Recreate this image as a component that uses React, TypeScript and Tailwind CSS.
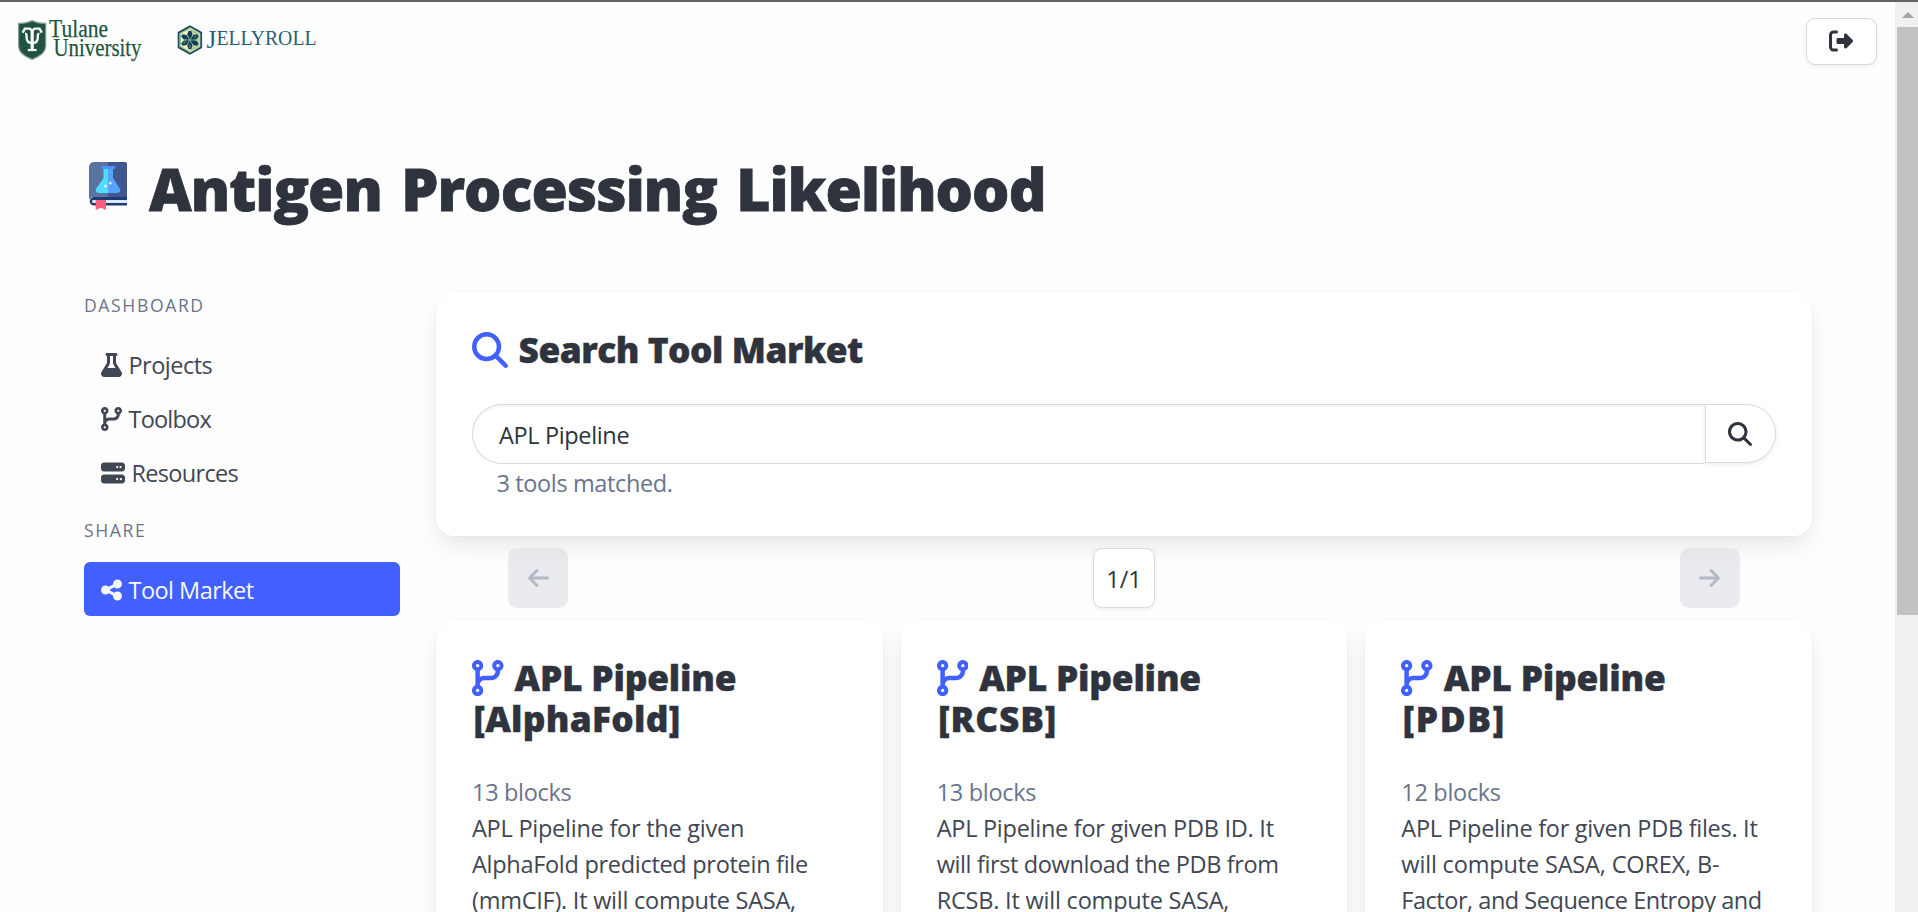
import type { ReactNode } from "react";
import {
  FaArrowLeft,
  FaArrowRight,
  FaCodeBranch,
  FaFlask,
  FaMagnifyingGlass,
  FaRightFromBracket,
  FaServer,
  FaShareNodes,
} from "react-icons/fa6";

type Line = { text: string; tracking: string };

type Tool = {
  name: Line;
  source: Line;
  blocks: string;
  lines: Line[];
};

const tools: Tool[] = [
  {
    name: { text: "APL Pipeline", tracking: "tracking-[-0.21px]" },
    source: { text: "[AlphaFold]", tracking: "tracking-[0.27px]" },
    blocks: "13 blocks",
    lines: [
      { text: "APL Pipeline for the given", tracking: "tracking-[-0.25px]" },
      { text: "AlphaFold predicted protein file", tracking: "tracking-[-0.3px]" },
      { text: "(mmCIF). It will compute SASA,", tracking: "tracking-[-0.26px]" },
    ],
  },
  {
    name: { text: "APL Pipeline", tracking: "tracking-[-0.21px]" },
    source: { text: "[RCSB]", tracking: "tracking-[0.85px]" },
    blocks: "13 blocks",
    lines: [
      { text: "APL Pipeline for given PDB ID. It", tracking: "tracking-[-0.27px]" },
      { text: "will first download the PDB from", tracking: "tracking-[-0.38px]" },
      { text: "RCSB. It will compute SASA,", tracking: "tracking-[-0.21px]" },
    ],
  },
  {
    name: { text: "APL Pipeline", tracking: "tracking-[-0.21px]" },
    source: { text: "[PDB]", tracking: "tracking-[1.6px]" },
    blocks: "12 blocks",
    lines: [
      { text: "APL Pipeline for given PDB files. It", tracking: "tracking-[-0.29px]" },
      { text: "will compute SASA, COREX, B-", tracking: "tracking-[-0.17px]" },
      { text: "Factor, and Sequence Entropy and", tracking: "tracking-[-0.48px]" },
    ],
  },
];

const cardShadow =
  "shadow-[0_12px_24px_-3px_rgba(10,10,10,0.1),0_0_0_1px_rgba(10,10,10,0.02)]";
const buttonShadow = "shadow-[0_2px_5px_rgba(46,51,61,0.08)]";

function TulaneLogo() {
  return (
    <svg className="h-[46px] w-[126px] overflow-visible" viewBox="0 0 126 46" role="img">
      <path
        d="M.6 3.4C5.5 3.4 10.500 2.600 14.200.6c3.700 2 8.700 2.800 13.500 2.800v22.400c0 7-5.500 10.600-13.500 13.600C6.200 36.400.6 32.800.6 25.800Z"
        fill="#1f5540"
        stroke="#8d9893"
        strokeWidth="1.2"
      />
      <g fill="none" stroke="#fff">
        <path d="M4.600 12.600 6.900 8.600h4.800l2.500 1.800 2.500-1.800h4.800l2.300 4" strokeWidth="2.400" />
        <path d="M14.200 9v20" strokeWidth="3.200" />
        <path d="M7 13.600c2 0 1.600 2 1.600 4 0 3.600 2 5.600 5.600 5.600s5.600-2 5.600-5.600c0-2-.4-4 1.600-4" strokeWidth="2.300" />
        <path d="M9.800 30h8.800" strokeWidth="2.200" />
      </g>
      <g className="font-['Liberation_Serif',serif]" fill="#1f5540" stroke="#1f5540" strokeWidth=".25">
        <text x="31" y="17" fontSize="25" textLength="59" lengthAdjust="spacingAndGlyphs">
          Tulane
        </text>
        <text x="35.500" y="36" fontSize="25" textLength="88" lengthAdjust="spacingAndGlyphs">
          University
        </text>
      </g>
    </svg>
  );
}

function JellyrollLogo() {
  return (
    <svg className="h-[30px] w-[140px] overflow-visible" viewBox="0 0 140 30" role="img">
      <path d="M12.900 1.200 24.200 7.600v14.800L12.900 28.800 1.600 22.400V7.600Z" fill="#f0f2bd" stroke="#1b4a63" strokeWidth="1.800" strokeLinejoin="round" />
      <path d="M12.900 3 22.600 8.500v13L12.900 27l6-12Z" fill="#79ac8c" opacity=".55" />
      <path d="M12.900 3 3.200 8.500v13L12.900 27" fill="none" stroke="#6f9f7c" />
      <g fill="#123d55">
        {[0, 60, 120, 180, 240, 300].map((angle) => (
          <path key={angle} d="M12.900 15 10.200 9.500l1.400-3.800h2.600l1.400 3.800Z" transform={`rotate(${angle} 12.900 15)`} />
        ))}
      </g>
      <circle cx="12.900" cy="15" r="1.800" fill="#69a586" />
      <path d="m9.900 10 1.700 2.800M6.400 18l3-1.300M12.900 19.500V23M16.900 12.500l2.200-1.500" stroke="#7fb79a" strokeWidth=".8" />
      <text x="29.500" y="22.600" fontSize="25" fill="#27607a" className="font-['Liberation_Serif',serif]">
        J
        <tspan x="39.500" y="19.900" fontSize="20.500" textLength="100" lengthAdjust="spacingAndGlyphs">
          ELLYROLL
        </tspan>
      </text>
    </svg>
  );
}

function BookIcon() {
  return (
    <svg className="h-12 w-[38px] shrink-0" viewBox="0 0 38 48">
      <path d="M5 35h33v8.500H5a4.250 4.250 0 0 1 0-8.500Z" fill="#1f3b75" />
      <path d="M4.500 38H38v3H4.500c-2.200 0-2.200-3 0-3Z" fill="#dfe8fb" />
      <path d="M5 0h14v35H5c-2.200 0-4 .8-5 2.600V5a5 5 0 0 1 5-5Z" fill="#5b749f" />
      <path d="M19 0h17.500A1.500 1.500 0 0 1 38 1.500V35H19Z" fill="#40588f" />
      <path d="M6.700 38H17v10l-5.100-2.300L6.700 48Z" fill="#ff5f7e" />
      <path d="M14.500 6H19v25h-9c-3 0-4-2.600-2.600-4.700L14.500 16Z" fill="#50dcff" />
      <path d="M19 6h5v10l6.600 10.300C32 28.400 31 31 28 31h-9Z" fill="#57a4ff" />
      <path d="M13.500 4H25a1.500 1.500 0 0 1 0 3H13.500a1.500 1.500 0 0 1 0-3Z" fill="#4793ff" />
      <circle cx="16.500" cy="24" r="1.500" fill="#d9f8ff" />
      <circle cx="21.300" cy="21" r="1.500" fill="#d3e8ff" />
    </svg>
  );
}

function MenuLabel({ children }: { children: ReactNode }) {
  return (
    <p className="h-[27px] text-[17.6px] leading-[27px] tracking-[1.6px] text-[#69748c]">{children}</p>
  );
}

function MenuItem({ icon, label, tracking, active }: { icon: ReactNode; label: string; tracking: string; active?: boolean }) {
  return (
    <a
      className={`flex h-[54px] items-center gap-[6.5px] rounded-md pl-[17px] ${
        active ? "bg-[#4160ff] text-[#f5f7ff]" : "text-[#404654]"
      }`}
    >
      {icon}
      <span className={`pt-px ${tracking}`}>{label}</span>
    </a>
  );
}

function ToolCard({ tool }: { tool: Tool }) {
  return (
    <article className={`rounded-[18px] bg-white p-9 ${cardShadow}`}>
      <h2 className="font-extrabold text-[35.3px] leading-[40.5px] text-[#2e333d] [-webkit-text-stroke:0.4px_#2e333d]">
        <span className="flex items-center gap-[11px]">
          <FaCodeBranch className="mt-[3px] h-9 w-[31.5px] shrink-0 text-[#4160ff]" />
          <span className={`whitespace-nowrap pt-px ${tool.name.tracking}`}>{tool.name.text}</span>
        </span>
        <span className={`block pl-[1.5px] pt-px ${tool.source.tracking}`}>{tool.source.text}</span>
      </h2>
      <p className="mt-[35px] text-[#69748c] tracking-[-0.32px]">{tool.blocks}</p>
      <p className="text-[#404654]">
        {tool.lines.map((line) => (
          <span key={line.text} className={`block whitespace-nowrap ${line.tracking}`}>
            {line.text}
          </span>
        ))}
      </p>
    </article>
  );
}

export default function App() {
  return (
    <div className="flex h-[912px] flex-col overflow-hidden bg-[#fefefe] font-['Open_Sans','Noto_Sans',sans-serif] text-[23.52px] leading-9">
      <div className="h-0.5 shrink-0 bg-[#656263]" />
      <div className="flex min-h-0 flex-1">
        <div className="min-w-0 flex-1 overflow-hidden">
          <header className="flex h-[78px] items-start pl-[18px] pr-[18px] pt-4">
            <div className="pt-0.5">
              <TulaneLogo />
            </div>
            <div className="ml-[33px] pt-[7px]">
              <JellyrollLogo />
            </div>
            <button className={`ml-auto flex h-[47px] w-[71px] items-center justify-center rounded-[9px] border border-[#d8d9e3] bg-white pb-px pr-px text-[#2e333d] ${buttonShadow}`}>
              <FaRightFromBracket className="size-6" />
            </button>
          </header>

          <div className="flex items-start gap-[22px] pl-[89px] pt-[73px]">
            <div className="pt-[9px]">
              <BookIcon />
            </div>
            <h1 className="h-[67.5px] whitespace-nowrap pt-[1.5px] font-extrabold text-[58.8px] leading-[67.5px] tracking-[-0.95px] text-[#2e333d] [-webkit-text-stroke:0.8px_#2e333d] [word-spacing:5px]">
              Antigen Processing Likelihood
            </h1>
          </div>

          <div className="mt-[71.5px] flex gap-9 pl-[84px] pr-[83px]">
            <aside className="w-[316px] shrink-0">
              <MenuLabel>DASHBOARD</MenuLabel>
              <nav className="my-[18px]">
                <MenuItem icon={<FaFlask className="mt-0.5 h-6 w-[21px]" />} label="Projects" tracking="tracking-[-0.53px]" />
                <MenuItem icon={<FaCodeBranch className="mt-0.5 h-6 w-[21px]" />} label="Toolbox" tracking="tracking-[-0.8px]" />
                <MenuItem icon={<FaServer className="mt-0.5 size-6" />} label="Resources" tracking="tracking-[-0.7px]" />
              </nav>
              <MenuLabel>SHARE</MenuLabel>
              <nav className="my-[18px]">
                <MenuItem active icon={<FaShareNodes className="mt-0.5 h-6 w-[21px]" />} label="Tool Market" tracking="tracking-[-0.55px]" />
              </nav>
            </aside>

            <main className="min-w-0 flex-1">
              <section className={`rounded-[18px] bg-white p-9 ${cardShadow}`}>
                <h2 className="flex h-[40.5px] items-center gap-[10.5px] font-extrabold text-[35.3px] leading-[40.5px] text-[#2e333d]">
                  <FaMagnifyingGlass className="mt-[3px] size-9 text-[#4160ff]" />
                  <span className="pt-0.5 tracking-[-0.48px] [-webkit-text-stroke:0.4px_#2e333d]">Search Tool Market</span>
                </h2>
                <div className="mt-[35px] flex items-start">
                  <div className="flex h-[60px] flex-1 items-center rounded-l-full border border-r-0 border-[#d8d9e1] bg-white pl-[26px] pt-0.5 shadow-[inset_0_2px_3px_rgba(46,51,61,0.05)] tracking-[-0.36px] text-[#2e333d]">
                    APL Pipeline
                  </div>
                  <button className={`flex h-[59px] w-[71px] items-center justify-center rounded-r-full border border-[#d8d9e1] bg-white pr-0.5 pt-px text-[#2e333d] ${buttonShadow}`}>
                    <FaMagnifyingGlass className="size-6" />
                  </button>
                </div>
                <p className="h-9 pl-[24.5px] pt-px tracking-[-0.38px] text-[#69748c]">3 tools matched.</p>
              </section>

              <div className="mt-3 flex h-[60px] items-center justify-between px-[72px]">
                <button className="flex size-[60px] items-center justify-center rounded-[9px] bg-[#d5d7df]/50 text-[#b3b9c6]">
                  <FaArrowLeft className="h-6 w-[21px]" />
                </button>
                <div className={`flex h-[60px] w-[62px] items-center justify-center rounded-[9px] border border-[#d8d9e1] bg-white pt-0.5 text-[#2e333d] ${buttonShadow}`}>
                  1/1
                </div>
                <button className="flex size-[60px] items-center justify-center rounded-[9px] bg-[#d5d7df]/50 pr-px text-[#b3b9c6]">
                  <FaArrowRight className="h-6 w-[21px]" />
                </button>
              </div>

              <div className="mt-3 grid h-[600px] grid-cols-3 gap-[18px]">
                {tools.map((tool) => (
                  <ToolCard key={tool.source.text} tool={tool} />
                ))}
              </div>
            </main>
          </div>
        </div>

        <div className="flex w-[23px] flex-col bg-[#f0f0f0] pl-0.5">
          <div className="flex h-[25px] shrink-0 items-center justify-center">
            <svg className="h-1.5 w-3" viewBox="0 0 12 6">
              <path d="M6 0l6 6H0Z" fill="#a3a3a3" />
            </svg>
          </div>
          <div className="h-[588px] bg-[#c1c1c1]" />
        </div>
      </div>
    </div>
  );
}
